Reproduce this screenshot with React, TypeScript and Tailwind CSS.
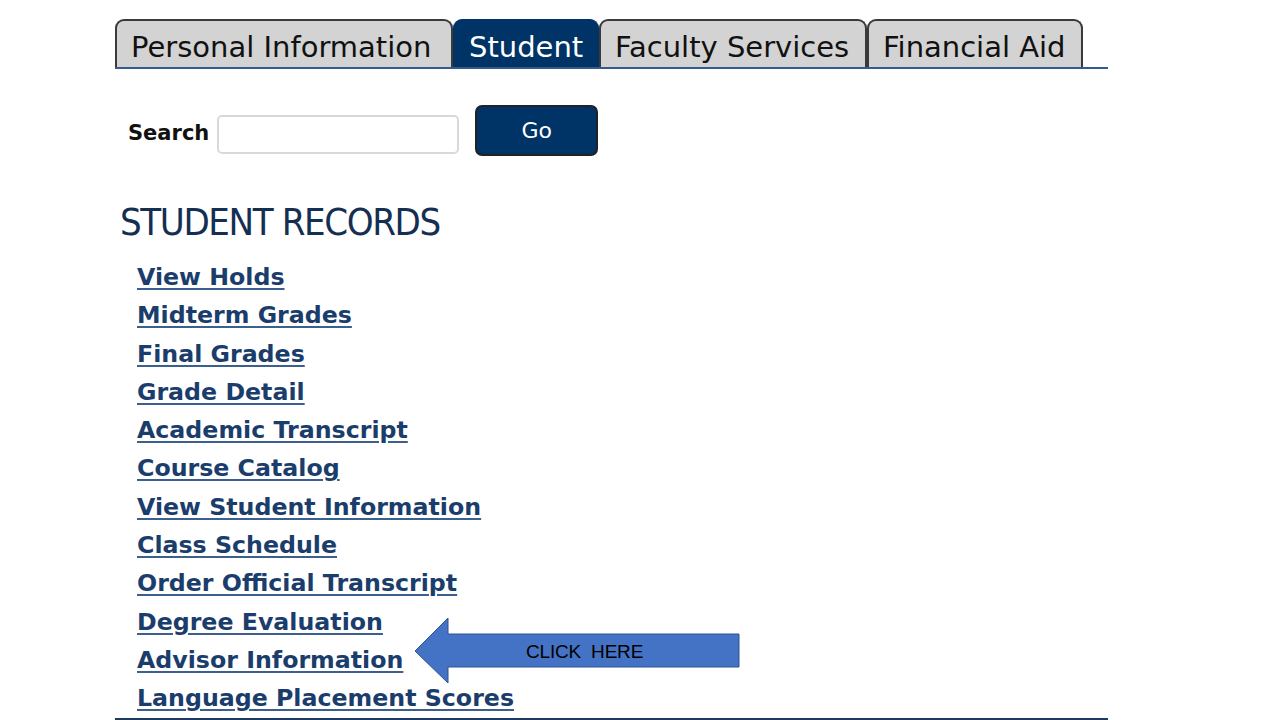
const tabs = [
  { label: "Personal Information", width: "w-[338px]", active: false },
  { label: "Student", width: "w-[146px]", active: true },
  { label: "Faculty Services", width: "w-[268px]", active: false },
  { label: "Financial Aid", width: "w-[216px]", active: false },
];

const links = [
  "View Holds",
  "Midterm Grades",
  "Final Grades",
  "Grade Detail",
  "Academic Transcript",
  "Course Catalog",
  "View Student Information",
  "Class Schedule",
  "Order Official Transcript",
  "Degree Evaluation",
  "Advisor Information",
  "Language Placement Scores",
];

const ClickArrow = () => (
  <div className="absolute left-[414px] top-[617px] w-[328px] h-[67px]">
    <svg width="328" height="67" viewBox="0 0 328 67" className="block">
      <polygon
        points="1,34 34,1 34,17 325,17 325,50 34,50 34,66"
        fill="#4472c4"
        stroke="#2f528f"
        strokeWidth="1"
      />
    </svg>
    <span className="absolute left-[112px] top-[25px] text-[19px] leading-none text-black font-['Liberation_Sans',Arial,sans-serif] tracking-[-0.2px] whitespace-pre">
      CLICK  HERE
    </span>
  </div>
);

export default function App() {
  return (
    <div className="relative w-[1280px] h-[720px] bg-white overflow-hidden font-['DejaVu_Sans',Verdana,sans-serif]">
      <div className="ml-[115px] w-[993px]">
        {/* Tabs */}
        <div className="flex items-end pt-[19px] border-b-2 border-[#345b8c]">
          {tabs.map((t) => (
            <div
              key={t.label}
              className={
                t.active
                  ? `${t.width} h-[48px] flex items-center pl-[15px] pt-[8px] rounded-t-[9px] bg-[#003366] text-white text-[29px] whitespace-nowrap border border-b-0 border-[#003366]`
                  : `${t.width} h-[48px] flex items-center pl-[14px] pt-[8px] rounded-t-[9px] bg-[#d3d3d3] text-[#111] text-[29px] whitespace-nowrap border-2 border-b-0 border-[#3a3a3a]`
              }
            >
              {t.label}
            </div>
          ))}
        </div>

        {/* Search */}
        <div className="flex items-start pl-[13px] mt-[36px]">
          <span className="mt-[18px] text-[21px] font-bold text-[#111] leading-none">
            Search
          </span>
          <input
            type="text"
            className="ml-[8px] mt-[10px] w-[242px] h-[39px] rounded-[5px] border-2 border-[#d9d9d9] bg-white outline-none"
          />
          <button className="ml-[16px] w-[123px] h-[51px] rounded-[7px] bg-[#003366] border-2 border-[#222] text-white text-[22px] leading-none">
            Go
          </button>
        </div>

        {/* Heading */}
        <h1 className="mt-[46px] ml-[5px] text-[38px] leading-[40px] text-[#142f52] font-['Liberation_Sans_Narrow','DejaVu_Sans_Condensed',sans-serif] tracking-[-1.4px]">
          STUDENT RECORDS
        </h1>

        {/* Links */}
        <ul className="mt-[16px] pl-[22px]">
          {links.map((l) => (
            <li key={l} className="h-[38.3px] leading-[38.3px]">
              <a
                href="#"
                className="text-[23.7px] font-bold text-[#1b3d6c] underline decoration-2 underline-offset-[3px] decoration-[#3b5f8e] whitespace-nowrap"
              >
                {l}
              </a>
            </li>
          ))}
        </ul>
        <div className="border-t-2 border-[#1e3a5f]" />
      </div>

      <ClickArrow />
    </div>
  );
}
